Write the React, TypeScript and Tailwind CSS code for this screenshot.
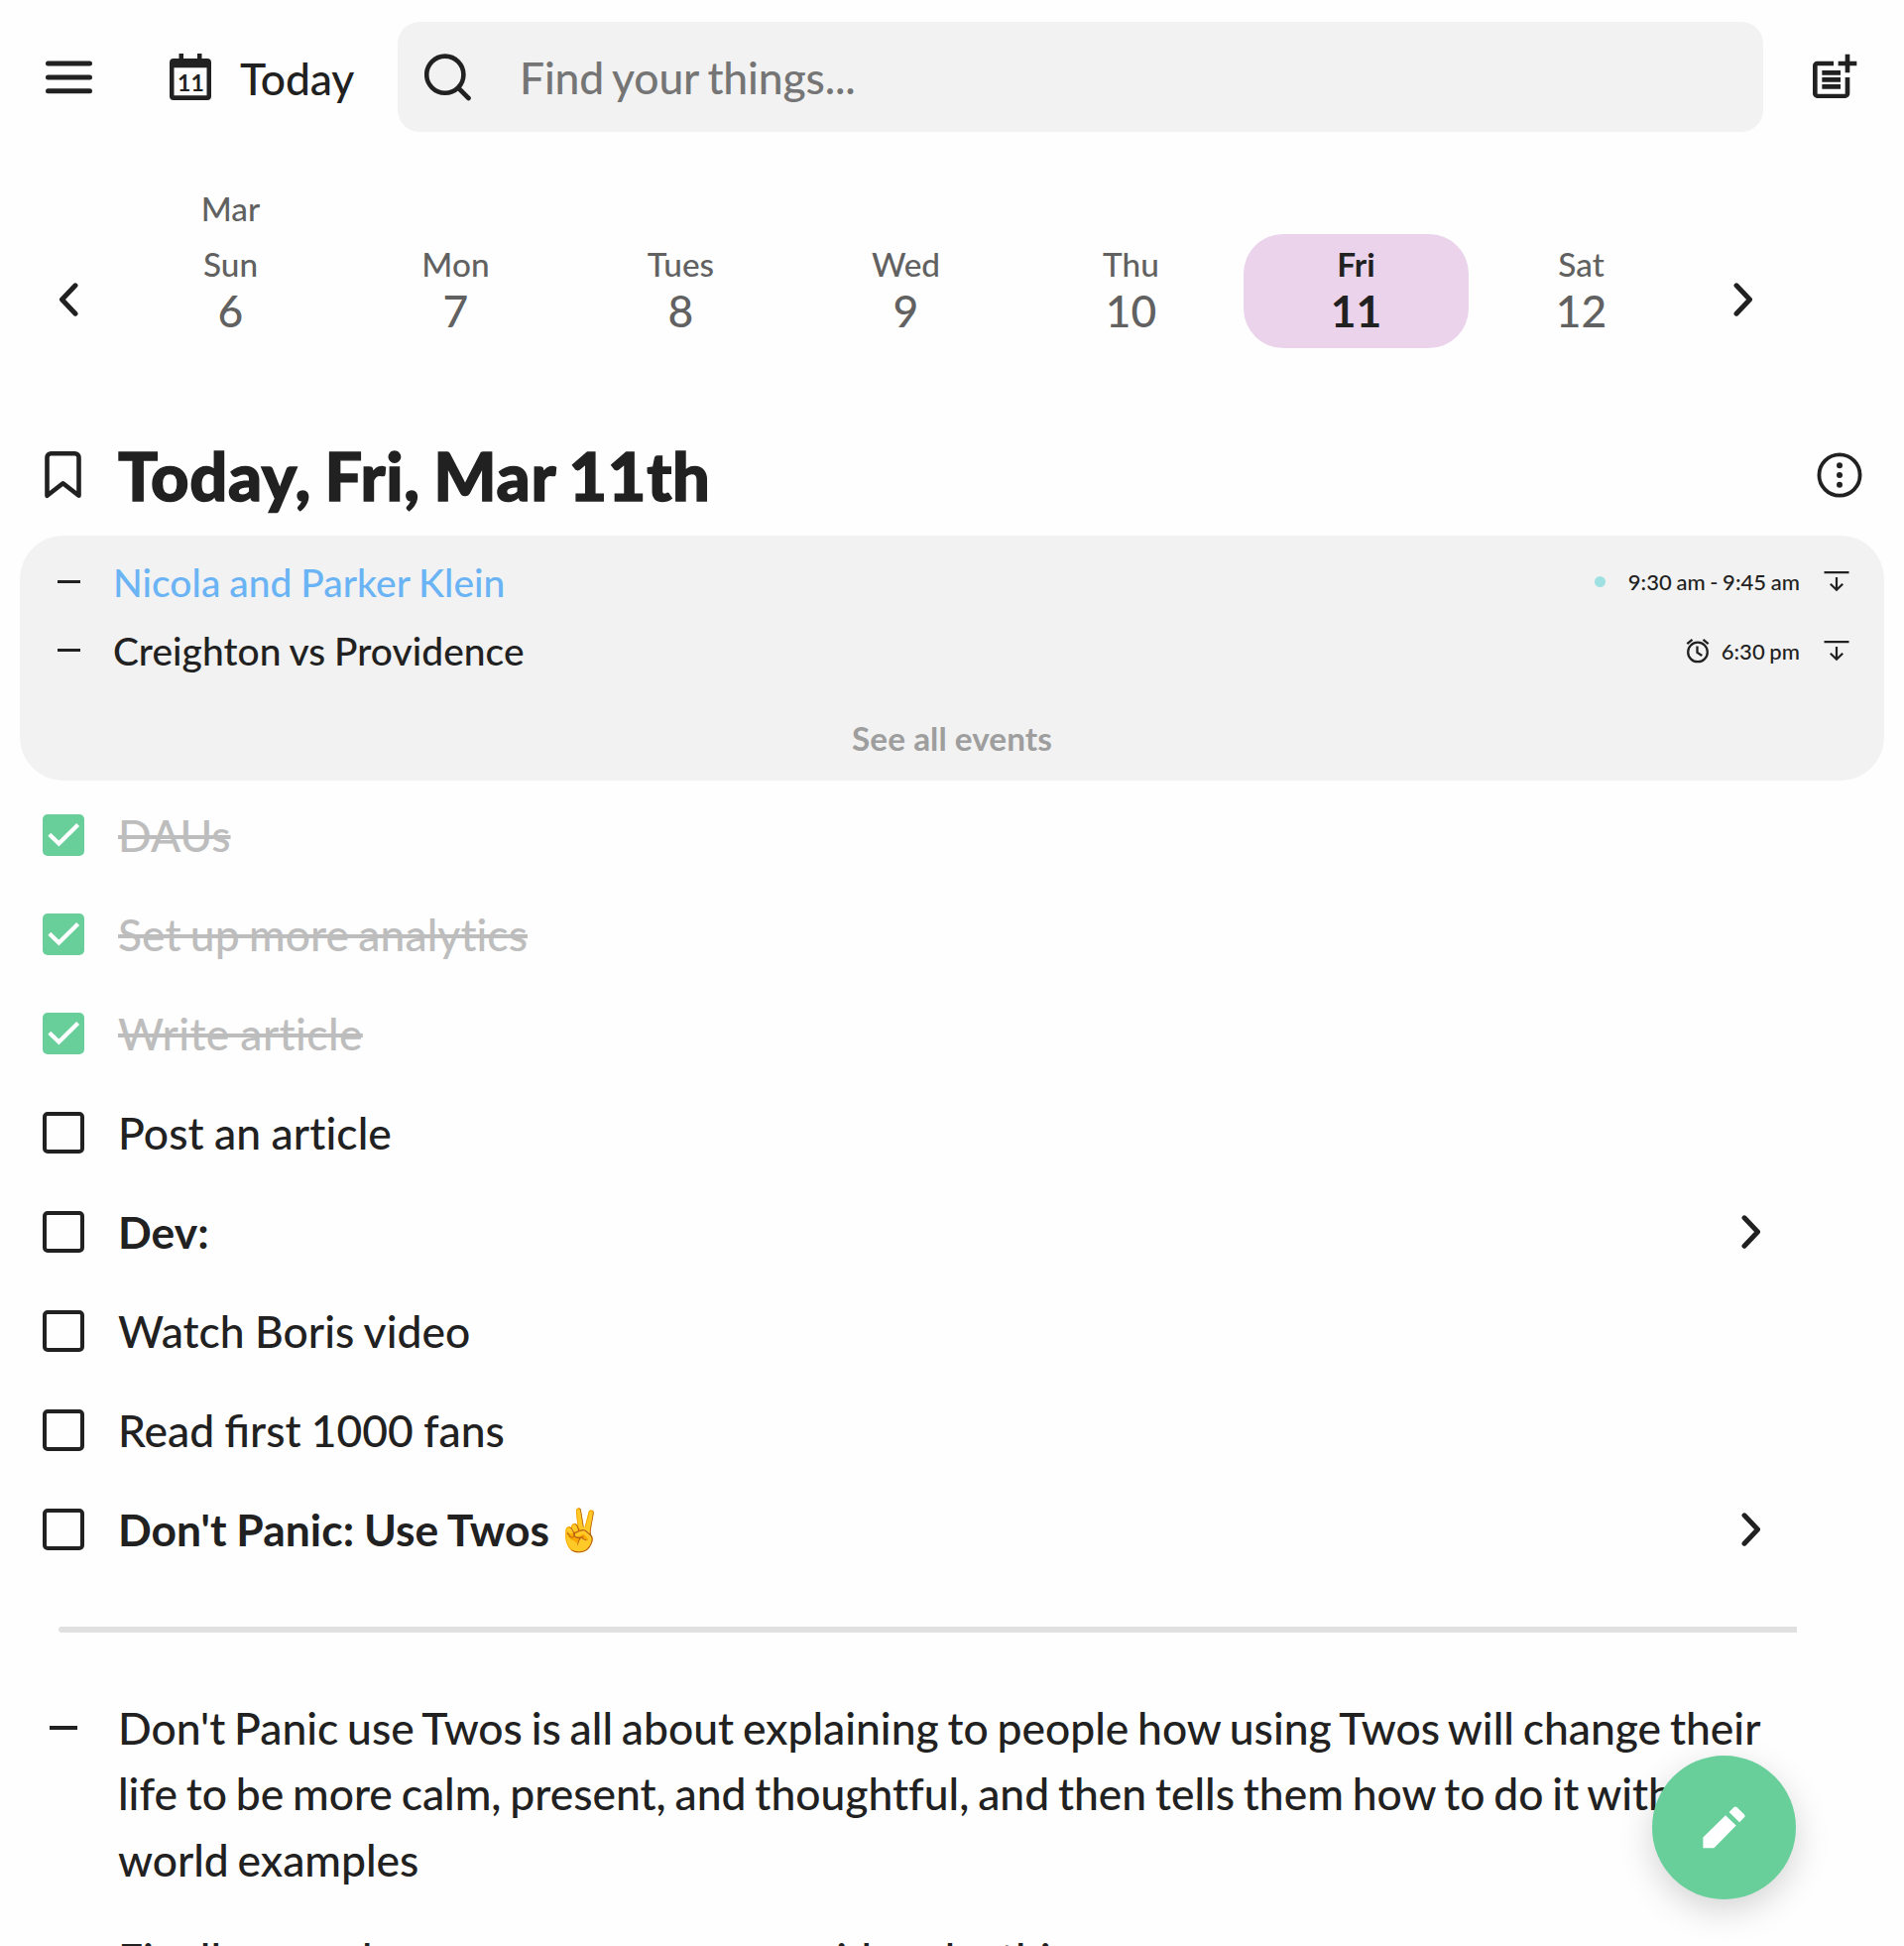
import React, { useState } from "react";
import { MdPostAdd } from "react-icons/md";
import clsx from "clsx";

interface Day {
  name: string;
  date: number;
  month?: string;
}

interface Thing {
  id: number;
  text: string;
  emoji?: string;
  done?: boolean;
  isList?: boolean;
  className?: string;
}

interface CalendarEvent {
  title: string;
  time: string;
  linked?: boolean;
  alarm?: boolean;
}

const days: Day[] = [
  { name: "Sun", date: 6, month: "Mar" },
  { name: "Mon", date: 7 },
  { name: "Tues", date: 8 },
  { name: "Wed", date: 9 },
  { name: "Thu", date: 10 },
  { name: "Fri", date: 11 },
  { name: "Sat", date: 12 },
];

const events: CalendarEvent[] = [
  { title: "Nicola and Parker Klein", time: "9:30 am - 9:45 am", linked: true },
  { title: "Creighton vs Providence", time: "6:30 pm", alarm: true },
];

const initialThings: Thing[] = [
  { id: 1, text: "DAUs", done: true },
  { id: 2, text: "Set up more analytics", done: true, className: "[word-spacing:-2px]" },
  { id: 3, text: "Write article", done: true, className: "tracking-[0.4px]" },
  { id: 4, text: "Post an article", className: "tracking-[0.1px]" },
  { id: 5, text: "Dev:", isList: true },
  { id: 6, text: "Watch Boris video" },
  {
    id: 7,
    text: "Read first 1000 fans",
    className: "tracking-normal [font-variant-ligatures:common-ligatures]",
  },
  { id: 8, text: "Don't Panic: Use Twos", emoji: "✌️", isList: true },
];

const notes = [
  "Don't Panic use Twos is all about explaining to people how using Twos will change their life to be more calm, present, and thoughtful, and then tells them how to do it with real world examples",
  "Finally, search across more numerous ideas by this",
];

const MenuIcon = () => (
  <svg width="47" height="34" viewBox="0 0 47 34" stroke="currentColor" strokeWidth="5" strokeLinecap="round">
    <path d="M2.5 3h42M2.5 17h42M2.5 30.8h42" />
  </svg>
);

const CalendarIcon = ({ date }: { date: number }) => (
  <svg width="42" height="48" viewBox="0 0 42 48">
    <path
      fill="currentColor"
      fillRule="evenodd"
      d="M9.5 0h4.5v5h14V0h4.5v5H38a4 4 0 0 1 4 4v34a4 4 0 0 1-4 4H4a4 4 0 0 1-4-4V9a4 4 0 0 1 4-4h5.5zM4.5 14.3v28h33v-28z"
    />
    <text x="21.5" y="37.5" textAnchor="middle" fontSize="23" fontWeight="700" fill="currentColor">
      {date}
    </text>
  </svg>
);

const SearchIcon = () => (
  <svg width="48" height="48" viewBox="0 0 48 48" fill="none" stroke="currentColor" strokeWidth="4.6" strokeLinecap="round">
    <circle cx="20.8" cy="21.2" r="18.6" />
    <path d="M34.5 35l10 10" />
  </svg>
);

const Chevron = ({ left }: { left?: boolean }) => (
  <svg
    width="20"
    height="34"
    viewBox="0 0 20 34"
    fill="none"
    stroke="currentColor"
    strokeWidth="5"
    strokeLinecap="round"
    strokeLinejoin="round"
    className={clsx(left && "rotate-180")}
  >
    <path d="M3 2.8L16.5 17L3 31.2" />
  </svg>
);

const BookmarkIcon = () => (
  <svg width="37" height="48" viewBox="0 0 37 48" fill="none" stroke="currentColor" strokeWidth="4.6" strokeLinejoin="round">
    <path d="M2.5 44.8V6.3a4 4 0 0 1 4-4h24a4 4 0 0 1 4 4v38.5L18.5 32.3z" />
  </svg>
);

const MoreIcon = () => (
  <svg width="46" height="46" viewBox="0 0 46 46" fill="none">
    <circle cx="23" cy="23" r="20.6" stroke="currentColor" strokeWidth="3.8" />
    <g fill="currentColor">
      <circle cx="23" cy="13.2" r="3" />
      <circle cx="23" cy="23" r="3" />
      <circle cx="23" cy="32.8" r="3" />
    </g>
  </svg>
);

const MoveDownIcon = () => (
  <svg width="26" height="22" viewBox="0 0 26 22" fill="none" stroke="currentColor" strokeWidth="2.2">
    <path d="M.5 2.2h25M13 7v12.6M6.8 13.8l6.2 6l6.2-6" />
  </svg>
);

const AlarmIcon = () => (
  <svg width="24" height="26" viewBox="0 0 24 26" fill="none" stroke="currentColor" strokeWidth="2.3">
    <circle cx="12" cy="14.4" r="9.8" />
    <path d="M11.5 8.6v6.3l4.8 3M1.3 6.2l5.2-4.4M22.7 6.2l-5.2-4.4" />
  </svg>
);

const PencilIcon = () => (
  <svg width="43" height="43" viewBox="0 0 43 43" fill="currentColor">
    <path d="M.4 31.4L23 9.2l10.7 10.4L11.4 42.2H.4z" />
    <path d="M26.6 6.1l4.8-4.8a2.3 2.3 0 0 1 3.2 0l7.2 7a2.3 2.3 0 0 1 0 3.2l-4.7 4.8z" />
  </svg>
);

const Checkbox = ({ checked, onClick }: { checked?: boolean; onClick: () => void }) => (
  <button
    onClick={onClick}
    className={clsx(
      "h-[42px] w-[42px] shrink-0 rounded-[5px]",
      checked ? "bg-[#68cf9b] text-white" : "border-[4.5px] border-[#212121]"
    )}
  >
    {checked && (
      <svg viewBox="0 0 42 42" fill="none" stroke="currentColor" strokeWidth="4.2">
        <path d="M6.8 20.2l9.6 9.4L35.6 10.4" />
      </svg>
    )}
  </button>
);

const Header = () => {
  const [query, setQuery] = useState("");

  return (
    <header className="flex h-[111px] items-center">
      <button className="ml-[46px] w-[125px]">
        <MenuIcon />
      </button>
      <button className="flex w-[230px] items-center gap-[29px]">
        <CalendarIcon date={11} />
        <span className="pt-[1px] text-[44.4px] leading-[53px] tracking-[-0.1px]">Today</span>
      </button>
      <div className="flex h-full w-[1377px] items-center rounded-[22px] bg-[#f2f2f2] pl-[27px]">
        <SearchIcon />
        <input
          className="ml-[48px] flex-1 bg-transparent text-[44.4px] leading-[54px] tracking-[-0.13px] [word-spacing:-2px] placeholder:text-[#757575] focus:outline-none"
          placeholder="Find your things..."
          value={query}
          onChange={(e) => setQuery(e.target.value)}
        />
      </div>
      <button className="ml-[43px]">
        <MdPostAdd size={56} />
      </button>
    </header>
  );
};

const WeekPicker = () => {
  const [selected, setSelected] = useState(11);

  return (
    <nav className="mt-[53px] flex items-start">
      <button className="w-[119px] pt-[99px] pl-[59px]">
        <Chevron left />
      </button>
      {days.map((day) => (
        <div key={day.date} className="w-[227px] text-center">
          <div className="h-[50px] text-[33.3px] leading-[49px] text-[#616161]">{day.month}</div>
          <button
            onClick={() => setSelected(day.date)}
            className={clsx(
              "h-[115px] w-full rounded-[40px] pb-px",
              day.date === selected ? "bg-[#ead3eb] font-bold text-[#212121]" : "text-[#616161]"
            )}
          >
            <div className="text-[33.3px] leading-[40px]">{day.name}</div>
            <div className="text-[44.4px] leading-[54px]">{day.date}</div>
          </button>
        </div>
      ))}
      <button className="pt-[99px] pl-[40px]">
        <Chevron />
      </button>
    </nav>
  );
};

const Events = () => (
  <section className="mx-[20px] mt-[21px] h-[247px] rounded-[44px] bg-[#f2f2f2] pt-[11.5px]">
    {events.map((event) => (
      <div key={event.title} className="flex h-[69.5px] items-center pr-[35px] pl-[38px]">
        <span className="h-[3px] w-[23px] bg-[#212121]" />
        <span className={clsx("ml-[33px] flex-1 pt-px text-[38.9px]", event.linked && "text-[#6ab4f5]")}>
          {event.title}
        </span>
        {event.alarm ? (
          <AlarmIcon />
        ) : (
          <span className="mr-[11px] h-[11px] w-[11px] rounded-full bg-[#9fe0e3]" />
        )}
        <span className="ml-[12px] pt-px text-[22px]">{event.time}</span>
        <button className="ml-[24px]">
          <MoveDownIcon />
        </button>
      </div>
    ))}
    <button className="mt-[28px] block w-full text-center text-[33.3px] leading-[50px] font-bold text-[#9e9e9e]">
      See all events
    </button>
  </section>
);

export default function App() {
  const [things, setThings] = useState<Thing[]>(initialThings);

  const toggle = (id: number) => {
    setThings(things.map((t) => (t.id === id ? { ...t, done: !t.done } : t)));
  };

  return (
    <div className="relative h-[1962px] w-[1920px] overflow-hidden bg-[#fefefe] pt-[22px] font-[Lato,sans-serif] font-medium tracking-[0.05px] text-[#212121] [font-variant-ligatures:no-common-ligatures] [word-spacing:-1px]">
      <Header />
      <WeekPicker />

      <div className="mt-[88px] flex h-[80px] items-center pr-[42px] pl-[45px]">
        <BookmarkIcon />
        <h1 className="ml-[37px] flex-1 text-[66.7px] leading-[80px] font-black tracking-[0.7px] [word-spacing:-3px] [-webkit-text-stroke:1.4px]">
          Today, Fri, Mar 11th
        </h1>
        <button>
          <MoreIcon />
        </button>
      </div>

      <Events />

      <ul className="mt-[5px]">
        {things.map((thing) => (
          <li key={thing.id} className="flex h-[100px] items-center pl-[43px]">
            <Checkbox checked={thing.done} onClick={() => toggle(thing.id)} />
            <span
              className={clsx(
                "ml-[34px] w-[1637px] text-[44.4px]",
                thing.done && "text-[#bdbdbd] line-through decoration-[4px]",
                thing.isList && "font-bold",
                thing.className
              )}
            >
              {thing.text}
              {thing.emoji && (
                <span className="relative -top-[2px] ml-[5px] text-[41px] leading-none">{thing.emoji}</span>
              )}
            </span>
            {thing.isList && <Chevron />}
          </li>
        ))}
      </ul>

      <hr className="mt-[48px] ml-[59px] h-[6px] w-[1753px] rounded-l-full border-0 bg-[#e0e0e0]" />

      <ul className="mt-[62.5px]">
        {notes.map((note) => (
          <li key={note} className="mb-[33.3px] flex pl-[50px]">
            <span className="mt-[31.5px] h-[4px] w-[28px] shrink-0 bg-[#212121]" />
            <p className="ml-[41px] w-[1668px] text-[44.4px] leading-[66.7px] tracking-normal [word-spacing:-2.4px]">
              {note}
            </p>
          </li>
        ))}
      </ul>

      <button className="absolute top-[1770px] left-[1666px] flex h-[145px] w-[145px] items-center justify-center rounded-full bg-[#68cf9b] text-white shadow-[0_11px_34px_rgba(0,0,0,0.17)]">
        <PencilIcon />
      </button>
    </div>
  );
}
